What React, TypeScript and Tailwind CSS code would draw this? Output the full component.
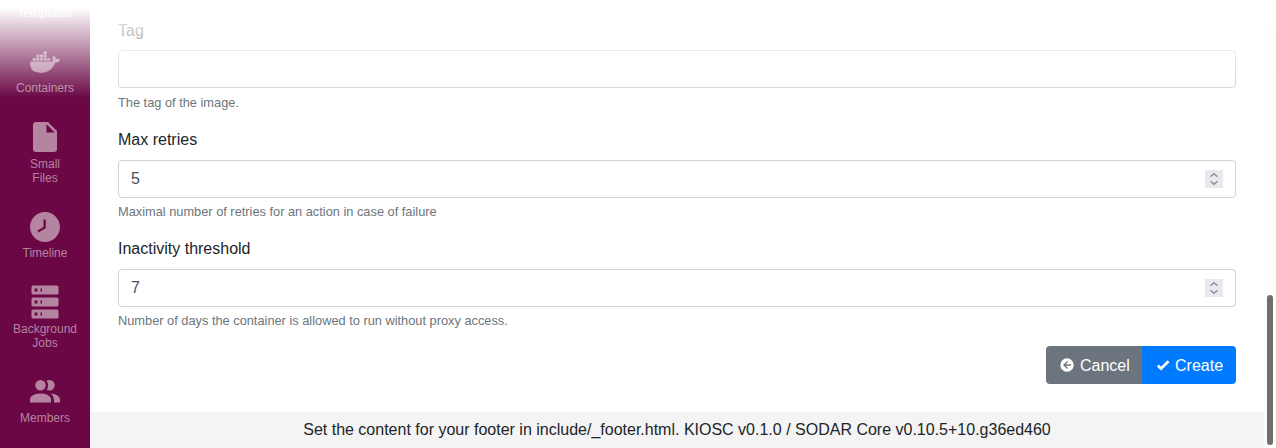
import React from "react";

const icons = {
  docker:
    "M21.81,10.25C21.75,10.21 21.25,9.82 20.17,9.82C19.89,9.82 19.61,9.85 19.33,9.9C19.12,8.5 17.95,7.79 17.9,7.76L17.61,7.59L17.43,7.86C17.19,8.22 17,8.63 16.92,9.05C16.72,9.85 16.84,10.61 17.25,11.26C16.76,11.54 15.96,11.61 15.79,11.61H2.62C2.28,11.61 2,11.89 2,12.24C2,13.39 2.18,14.54 2.58,15.62C3.03,16.81 3.71,17.69 4.58,18.23C5.56,18.83 7.17,19.17 9,19.17C9.79,19.17 10.61,19.1 11.42,18.95C12.54,18.75 13.62,18.36 14.61,17.79C15.43,17.32 16.16,16.72 16.78,16C17.82,14.83 18.43,13.5 18.89,12.35H19.08C20.23,12.35 20.94,11.89 21.33,11.5C21.59,11.26 21.78,10.97 21.92,10.63L22,10.39L21.81,10.25M3.69,9.34H5.77V11.24H3.69ZM6.13,9.34H8.21V11.24H6.13ZM8.58,9.34H10.66V11.24H8.58ZM11.03,9.34H13.11V11.24H11.03ZM13.46,9.34H15.54V11.24H13.46ZM6.13,7.07H8.21V8.97H6.13ZM8.58,7.07H10.66V8.97H8.58ZM11.03,7.07H13.11V8.97H11.03ZM11.03,4.8H13.11V6.7H11.03Z",
  file: "M13,9V3.5L18.5,9M6,2C4.89,2 4,2.89 4,4V20A2,2 0 0,0 6,22H18A2,2 0 0,0 20,20V8L14,2H6Z",
  clock:
    "M12,2C6.5,2 2,6.5 2,12C2,17.5 6.5,22 12,22C17.5,22 22,17.5 22,12C22,6.5 17.5,2 12,2M12.5,12.8L7.7,15.6L7,14.3L11,12V7H12.5V12.8Z",
  server:
    "M4,1H20A1,1 0 0,1 21,2V6A1,1 0 0,1 20,7H4A1,1 0 0,1 3,6V2A1,1 0 0,1 4,1M4,9H20A1,1 0 0,1 21,10V14A1,1 0 0,1 20,15H4A1,1 0 0,1 3,14V10A1,1 0 0,1 4,9M4,17H20A1,1 0 0,1 21,18V22A1,1 0 0,1 20,23H4A1,1 0 0,1 3,22V18A1,1 0 0,1 4,17M9,5H10V3H9V5M9,13H10V11H9V13M9,21H10V19H9V21M5,3V5H7V3H5M5,11V13H7V11H5M5,19V21H7V19H5Z",
  members:
    "M16 17V19H2V17S2 13 9 13 16 17 16 17M12.5 7.5A3.5 3.5 0 1 0 9 11A3.5 3.5 0 0 0 12.5 7.5M15.94 13A5.32 5.32 0 0 1 18 17V19H22V17S22 13.37 15.94 13M15 4A3.39 3.39 0 0 0 13.07 4.59A5 5 0 0 1 13.07 10.41A3.39 3.39 0 0 0 15 11A3.5 3.5 0 0 0 15 4Z",
  back: "M2,12A10,10 0 0,1 12,2A10,10 0 0,1 22,12A10,10 0 0,1 12,22A10,10 0 0,1 2,12M18,11H10L13.5,7.5L12.08,6.08L6.16,12L12.08,17.92L13.5,16.5L10,13H18V11Z",
  check: "M9,20.42L2.79,14.21L5.62,11.38L9,14.77L18.88,4.88L21.71,7.71L9,20.42Z",
};

function Icon({ name, className }: { name: keyof typeof icons; className: string }) {
  return (
    <svg viewBox="0 0 24 24" fill="currentColor" fillRule="evenodd" className={className}>
      <path d={icons[name]} />
    </svg>
  );
}

function NavItem({ icon, lines, className }: { icon: keyof typeof icons; lines: string[]; className: string }) {
  return (
    <a className={`flex shrink-0 flex-col items-center ${className}`}>
      <Icon name={icon} className="mb-px size-9" />
      {lines.map((line) => (
        <span key={line} className="block">
          {line}
        </span>
      ))}
    </a>
  );
}

function Field({
  label,
  value,
  help,
  labelGap = "mb-2",
  helpGap = "mt-1",
}: {
  label: string;
  value?: string;
  help: string;
  labelGap?: string;
  helpGap?: string;
}) {
  return (
    <div className="h-[109px]">
      <div className={`h-6 leading-6 text-[#212529] ${labelGap}`}>{label}</div>
      <div className="flex h-[38px] items-center justify-between rounded border border-[#ced4da] px-3 text-[#495057]">
        <span>{value}</span>
        {value && (
          <span className="flex h-[18px] w-[18px] items-center justify-center bg-[#e9e9ed] text-[#8f8f9d]">
            <svg viewBox="0 0 18 18" fill="none" stroke="currentColor" strokeWidth="1.5" className="size-[18px]">
              <path d="M5.5 6.7L9 3.7L12.5 6.7M5.5 11.3L9 14.3L12.5 11.3" />
            </svg>
          </span>
        )}
      </div>
      <div className={`text-[12.8px] leading-[20px] text-[#6c757d] ${helpGap}`}>{help}</div>
    </div>
  );
}

export default function App() {
  return (
    <div className="relative flex h-[448px] w-[1276px] overflow-hidden bg-white font-['Liberation_Sans',sans-serif] text-base">
      <nav className="flex w-[90px] shrink-0 flex-col bg-[#6a0744] text-center text-[12px] leading-[14px] text-[#b584a1]">
        <span className="h-11 pt-[6px] text-white">Templates</span>
        <NavItem icon="docker" lines={["Containers"]} className="h-[75px]" />
        <NavItem icon="file" lines={["Small", "Files"]} className="h-[90px] gap-px [&>span+span]:-mt-px" />
        <NavItem icon="clock" lines={["Timeline"]} className="h-[75px]" />
        <NavItem icon="server" lines={["Background", "Jobs"]} className="h-[90px] gap-px [&>span+span]:-mt-px" />
        <NavItem icon="members" lines={["Members"]} className="h-[74px]" />
      </nav>
      <main className="flex w-[1174px] shrink-0 flex-col">
        <div className="h-[412px] pr-7 pl-7 pt-[19px]">
          <Field label="Tag" help="The tag of the image." labelGap="mb-[7px]" helpGap="mt-[5px]" />
          <Field label="Max retries" value="5" help="Maximal number of retries for an action in case of failure" />
          <Field
            label="Inactivity threshold"
            value="7"
            help="Number of days the container is allowed to run without proxy access."
          />
          <div className="flex h-[38px] justify-end text-white">
            <button className="flex w-24 items-center rounded-l bg-[#6c757d] pl-[13px]">
              <Icon name="back" className="mr-[5px] size-4" />
              <span className="pt-[2px]">Cancel</span>
            </button>
            <button className="flex w-[94px] items-center rounded-r bg-[#007bff] pl-[13px]">
              <Icon name="check" className="mr-1 size-4" />
              <span className="pt-[2px]">Create</span>
            </button>
          </div>
        </div>
        <footer className="h-9 bg-[#f4f4f4] pt-[6px] text-center leading-6 text-[#212529]">
          Set the content for your footer in include/_footer.html. KIOSC v0.1.0 / SODAR Core v0.10.5+10.g36ed460
        </footer>
      </main>
      <aside className="flex w-3 flex-col bg-[#fdfdfd] pt-[295px] pl-[3px]">
        <div className="h-[150px] w-[6px] rounded-full bg-[#6e6e6e]" />
      </aside>
      <div className="pointer-events-none absolute inset-x-0 top-0 h-[98px] bg-linear-to-b from-white from-8% to-white/0" />
    </div>
  );
}
